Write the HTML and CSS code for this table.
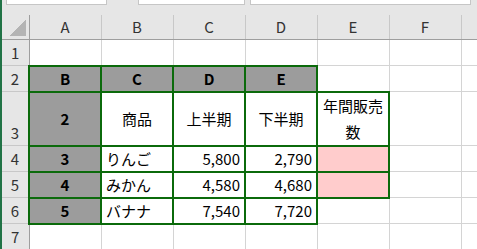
FILE: index.html
```html
<!DOCTYPE html>
<html>
  <head>
    <title>Book1 - Sheet1</title>
    <meta charset="UTF-8" />
    <link rel="stylesheet" href="styles.css">
  </head>
  <body>
    <div class="window">
      <div class="bar">
        <span class="box name-box"></span>
        <span class="box fx-box"></span>
        <span class="box input-box"></span>
      </div>

      <table class="sheet">
        <colgroup>
          <col class="col-head">
          <col class="col"><col class="col"><col class="col"><col class="col">
          <col class="col"><col class="col"><col class="col">
        </colgroup>
        <thead>
          <tr class="row-cols">
            <th class="corner"><span class="tri"></span></th>
            <th>A</th><th>B</th><th>C</th><th>D</th><th>E</th><th>F</th><th></th>
          </tr>
        </thead>
        <tbody>
          <tr>
            <th>1</th><td></td><td></td><td></td><td></td><td></td><td></td><td></td>
          </tr>
          <tr>
            <th>2</th>
            <td class="bx fill key">B</td>
            <td class="bx fill key">C</td>
            <td class="bx fill key">D</td>
            <td class="bx fill key">E</td>
            <td></td><td></td><td></td>
          </tr>
          <tr class="row-tall">
            <th>3</th>
            <td class="bx fill key">2</td>
            <td class="bx mid">商品</td>
            <td class="bx mid">上半期</td>
            <td class="bx mid">下半期</td>
            <td class="bx mid wrap">年間販売数</td>
            <td></td><td></td>
          </tr>
          <tr>
            <th>4</th>
            <td class="bx fill key">3</td>
            <td class="bx">りんご</td>
            <td class="bx num">5,800</td>
            <td class="bx num">2,790</td>
            <td class="bx pink"></td>
            <td></td><td></td>
          </tr>
          <tr>
            <th>5</th>
            <td class="bx fill key">4</td>
            <td class="bx">みかん</td>
            <td class="bx num">4,580</td>
            <td class="bx num">4,680</td>
            <td class="bx pink"></td>
            <td></td><td></td>
          </tr>
          <tr>
            <th>6</th>
            <td class="bx fill key">5</td>
            <td class="bx">バナナ</td>
            <td class="bx num">7,540</td>
            <td class="bx num">7,720</td>
            <td></td><td></td><td></td>
          </tr>
          <tr>
            <th>7</th><td></td><td></td><td></td><td></td><td></td><td></td><td></td>
          </tr>
          <tr>
            <th></th><td></td><td></td><td></td><td></td><td></td><td></td><td></td>
          </tr>
        </tbody>
      </table>
    </div>
  </body>
</html>
```

FILE: styles.css
```css
html, body {
  margin: 0;
  height: 100%;
  overflow: hidden;
  background: #fff;
}

.window {
  height: 100%;
  overflow: hidden;
  border-left: 2px solid #217346;
  font-family: "Noto Sans CJK JP", "Noto Sans", sans-serif;
}

/* formula bar, only its lower edge shows */
.bar {
  height: 15px;
  background: #e6e6e6;
  position: relative;
}
.box {
  position: absolute;
  top: -4px;
  height: 7px;
  background: #fff;
  border: 1px solid #c6c6c6;
}
.name-box { left: 4px; width: 99px; }
.fx-box { left: 136px; width: 105px; }
.input-box { left: 248px; width: 219px; }

.sheet {
  border-collapse: collapse;
  table-layout: fixed;
  width: 531px;
  font-size: 15px;
}
.col-head { width: 27px; }
.col { width: 72px; }

.sheet tr { height: 26px; }
.sheet .row-cols { height: 24px; }
.sheet .row-tall { height: 51px; }

.sheet th,
.sheet td {
  padding: 0 4px;
  white-space: nowrap;
  overflow: hidden;
  line-height: 24px;
}

/* column and row headings */
.sheet th {
  background: #e6e6e6;
  color: #333;
  font-weight: normal;
  text-align: center;
  padding: 0;
}
.sheet thead th {
  border-right: 1px solid #c8c8c8;
  border-bottom: 1px solid #9e9e9e;
  vertical-align: middle;
}
.sheet tbody th {
  border-right: 1px solid #9e9e9e;
  border-bottom: 1px solid #c8c8c8;
  vertical-align: bottom;
}
.sheet .corner {
  position: relative;
  border-right: 1px solid #9e9e9e;
}
.tri {
  position: absolute;
  right: 3px;
  bottom: 3px;
  width: 17px;
  height: 17px;
  background: linear-gradient(to top left, #b4b4b4 50%, transparent 50%);
}

.sheet td {
  border: 1px solid #d4d4d4;
  color: #000;
  vertical-align: bottom;
}

/* cells with a thick green frame */
.sheet td.bx { border: 2px solid #0b6a0b; }
.sheet td.fill { background: #9c9c9c; }
.sheet td.pink { background: #ffcccc; }
.sheet td.key {
  font-weight: bold;
  text-align: center;
}
.sheet .row-tall td.key,
.sheet td.mid {
  text-align: center;
  vertical-align: middle;
}
.sheet td.num { text-align: right; }
.sheet td.wrap {
  white-space: normal;
  line-height: 26px;
}
```
